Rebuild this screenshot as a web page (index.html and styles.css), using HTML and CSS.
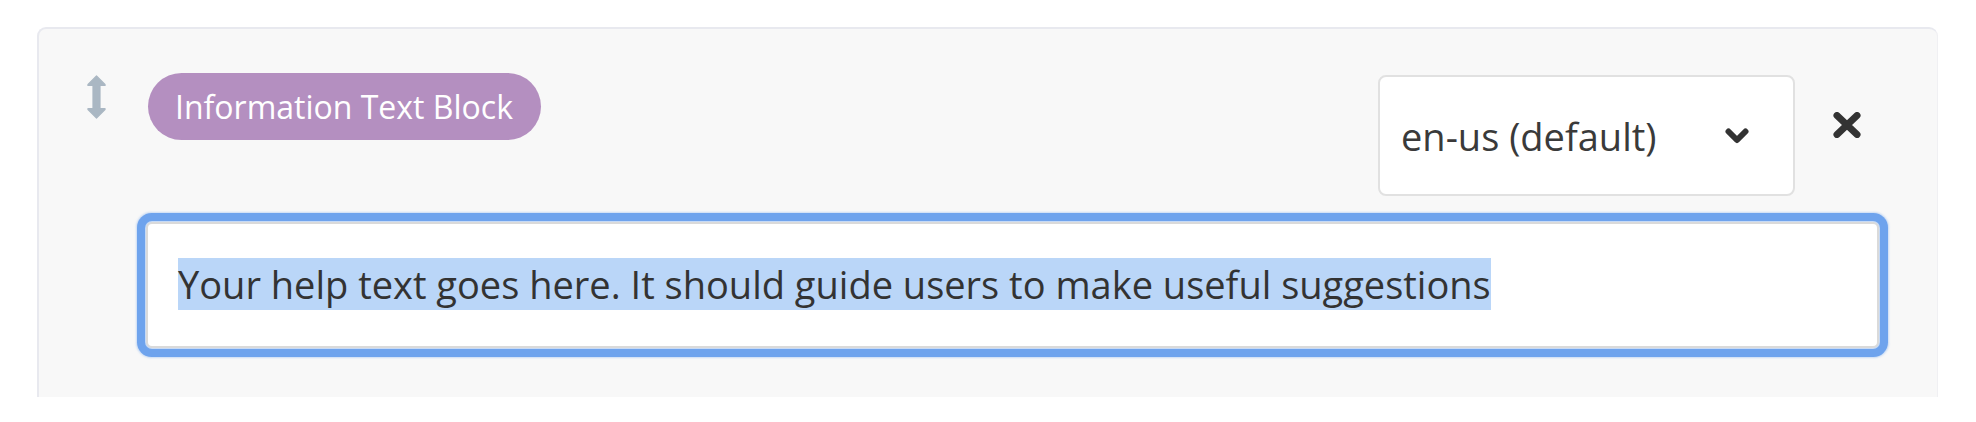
FILE: index.html
```html
<!DOCTYPE html>
<html lang="en">
<head>
<meta charset="utf-8">
<title>Information Text Block</title>
<link rel="stylesheet" href="styles.css">
</head>
<body>
<div class="panel">
  <div class="handle" aria-label="Drag to reorder">
    <svg width="19" height="44" viewBox="0 0 19 44">
      <path d="M9.5 1 L18 9.5 Q18.6 10.5 17.5 10.5 L13 10.5 L13 33.5 L17.5 33.5 Q18.6 33.5 18 34.5 L9.5 43 L1 34.5 Q0.4 33.5 1.5 33.5 L6 33.5 L6 10.5 L1.5 10.5 Q0.4 10.5 1 9.5 Z" fill="#aab7c3" stroke="#aab7c3" stroke-width="1.2" stroke-linejoin="round"/>
    </svg>
  </div>
  <div class="content">
    <div class="header">
      <span class="pill">Information Text Block</span>
      <div class="controls">
        <div class="select">
          <span class="select-label">en-us (default)</span>
          <svg class="chevron" width="24" height="16" viewBox="0 0 24 16">
            <polyline points="3.5,3.5 12,12 20.5,3.5" fill="none" stroke="#333" stroke-width="6" stroke-linecap="round" stroke-linejoin="round"/>
          </svg>
        </div>
        <div class="close" aria-label="Remove">
          <svg width="28" height="26" viewBox="0 0 28 26">
            <path d="M4 3.5 L24 22.5 M24 3.5 L4 22.5" stroke="#333" stroke-width="7" stroke-linecap="round"/>
          </svg>
        </div>
      </div>
    </div>
    <div class="textarea"><span class="selected">Your help text goes here. It should guide users to make useful suggestions</span></div>
  </div>
</div>
</body>
</html>
```

FILE: styles.css
```css
html, body {
  margin: 0;
  padding: 0;
  background: #ffffff;
}

body {
  font-family: "Open Sans", "Liberation Sans", sans-serif;
  color: #333333;
}

.panel {
  margin: 27px 0 0 37px;
  width: 1901px;
  box-sizing: border-box;
  background: #f8f8f8;
  border-top: 2px solid #e8e9ef;
  border-left: 2px solid #e8e9ef;
  border-right: 1px solid #f0f0f3;
  border-radius: 9px 9px 0 0;
  padding: 44px 58px 49px 48px;
  display: flex;
  align-items: flex-start;
  gap: 40px;
}

.handle {
  width: 19px;
  height: 44px;
  margin-top: 2px;
  flex: none;
}

.handle svg {
  display: block;
}

.content {
  flex: 1;
  display: flex;
  flex-direction: column;
  gap: 26px;
}

.header {
  display: flex;
  justify-content: space-between;
  align-items: flex-start;
  height: 123px;
}

.pill {
  display: inline-flex;
  align-items: center;
  justify-content: center;
  height: 67px;
  margin-left: 2px;
  padding: 0 28px 0 27px;
  box-sizing: border-box;
  border-radius: 34px;
  background: #b48fc0;
  color: #ffffff;
  font-size: 32px;
  white-space: nowrap;
}

.controls {
  display: flex;
  align-items: flex-start;
  gap: 20px;
  margin-top: 2px;
}

.select {
  width: 417px;
  height: 121px;
  box-sizing: border-box;
  border: 2px solid #e1e1e1;
  border-radius: 8px;
  background: #ffffff;
  display: flex;
  align-items: center;
  justify-content: space-between;
  padding: 0 44px 0 21px;
  font-size: 38px;
  color: #3a3a3a;
}

.select-label {
  white-space: nowrap;
}

.chevron {
  display: block;
}

.close {
  width: 64px;
  height: 100px;
  display: flex;
  align-items: center;
  justify-content: center;
}

.close svg {
  display: block;
}

.textarea {
  height: 126px;
  box-sizing: border-box;
  border: 2px solid #dadada;
  border-radius: 6px;
  background: #ffffff;
  padding: 34px 30px;
  font-size: 38px;
  color: #333333;
  white-space: nowrap;
  box-shadow: 0 0 0 1px #c6daf6, 0 0 0 9px #6ea3ed, 0 0 2px 10px rgba(110, 163, 237, 0.35);
}

.selected {
  background: #bad6f8;
}
```
